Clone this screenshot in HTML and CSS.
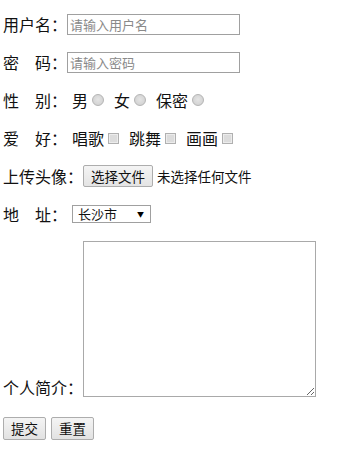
FILE: index.html
```html
<!DOCTYPE html>
<html lang="zh-CN">
<head>
<meta charset="utf-8">
<title>注册</title>
<link rel="stylesheet" href="styles.css">
</head>
<body>
<form class="form">
  <div class="row"><span class="lbl">用户名：</span><input class="text" type="text" placeholder="请输入用户名"></div>
  <div class="row"><span class="lbl">密　码：</span><input class="text" type="password" placeholder="请输入密码"></div>
  <div class="row"><span class="lbl">性　别：</span>
    <label class="opt">男<input class="radio" type="radio" name="sex"></label>
    <label class="opt">女<input class="radio" type="radio" name="sex"></label>
    <label class="opt">保密<input class="radio" type="radio" name="sex"></label>
  </div>
  <div class="row"><span class="lbl">爱　好：</span>
    <label class="opt">唱歌<input class="check" type="checkbox"></label>
    <label class="opt">跳舞<input class="check" type="checkbox"></label>
    <label class="opt">画画<input class="check" type="checkbox"></label>
  </div>
  <div class="row"><span class="lbl">上传头像：</span><span class="filebtn">选择文件</span><span class="filename">未选择任何文件</span></div>
  <div class="row"><span class="lbl">地　址：</span>
    <span class="select"><span class="select-text">长沙市</span><span class="select-arrow">▼</span></span>
  </div>
  <div class="row row-area"><span class="lbl">个人简介：</span><textarea class="area"></textarea></div>
  <div class="actions"><button class="btn" type="button">提交</button><button class="btn" type="button">重置</button></div>
</form>
</body>
</html>
```

FILE: styles.css
```css
html, body {
  margin: 0;
  padding: 0;
  background: #fff;
}
body {
  font-family: "Noto Sans CJK SC", "Noto Sans", sans-serif;
  font-size: 16px;
  color: #111;
}
.form {
  display: flex;
  flex-direction: column;
  gap: 16px;
  padding: 13px 3px;
}
.row {
  display: flex;
  align-items: center;
  height: 22px;
  line-height: 22px;
  white-space: nowrap;
}
.text {
  box-sizing: border-box;
  width: 173px;
  height: 21px;
  margin: 0;
  padding: 0 2px;
  border: 1px solid #a0a0a0;
  font-family: "Noto Sans CJK SC", sans-serif;
  font-size: 13px;
  outline: none;
}
.text::placeholder {
  color: #8a8a8a;
}
.opt {
  display: flex;
  align-items: center;
  margin-left: 7px;
}
.opt:first-of-type {
  margin-left: 5px;
}
.radio {
  appearance: none;
  -webkit-appearance: none;
  box-sizing: border-box;
  width: 12px;
  height: 12px;
  margin: 0 3px 0 4px;
  border: 1px solid #b4b4b4;
  border-radius: 50%;
  background: radial-gradient(circle at 50% 45%, #e4e4e4 0%, #d4d4d4 70%, #c8c8c8 100%);
}
.check {
  appearance: none;
  -webkit-appearance: none;
  box-sizing: border-box;
  width: 11px;
  height: 11px;
  margin: 1px 3px 0 4px;
  border: 1px solid #b0b0b0;
  background: #dcdcdc;
  box-shadow: inset 0 0 0 1px #ececec;
}
.filebtn {
  box-sizing: border-box;
  height: 22px;
  line-height: 20px;
  padding: 0 7px;
  border: 1px solid #adadad;
  border-radius: 2px;
  background: linear-gradient(#f4f4f4, #e4e4e4);
  font-size: 13.5px;
  color: #111;
}
.filename {
  margin-left: 4px;
  font-size: 13.5px;
}
.select {
  box-sizing: border-box;
  display: flex;
  align-items: center;
  justify-content: space-between;
  width: 79px;
  height: 18px;
  margin-left: 5px;
  padding: 0 6px 0 5px;
  border: 1px solid #a0a0a0;
  font-size: 13px;
  line-height: 16px;
}
.select-arrow {
  font-size: 7px;
  line-height: 16px;
  color: #000;
}
.row-area {
  height: auto;
  align-items: flex-end;
  line-height: 20px;
}
.area {
  box-sizing: border-box;
  width: 233px;
  height: 156px;
  margin: 0;
  border: 1px solid #a9a9a9;
  outline: none;
}
.actions {
  display: flex;
  gap: 5px;
  margin-top: 4px;
}
.btn {
  box-sizing: border-box;
  height: 23px;
  margin: 0;
  padding: 0 7px;
  border: 1px solid #adadad;
  border-radius: 2px;
  background: linear-gradient(#f4f4f4, #e2e2e2);
  font-family: "Noto Sans CJK SC", sans-serif;
  font-size: 13.5px;
  color: #111;
  line-height: 21px;
}
```
